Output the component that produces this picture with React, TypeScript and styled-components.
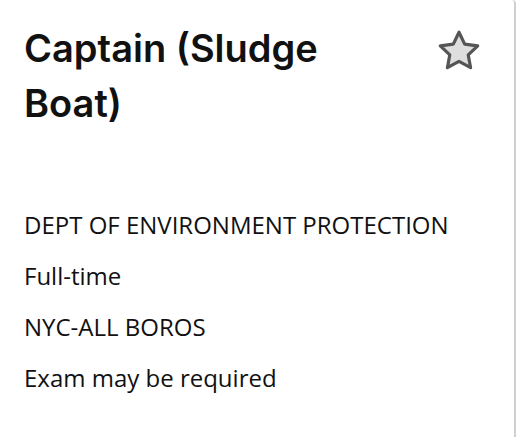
import React from "react";
import styled, { createGlobalStyle } from "styled-components";

const GlobalStyle = createGlobalStyle`
    html, body {
        margin: 0;
        padding: 0;
        background: #ffffff;
    }
`;

const Card = styled("div")`
    box-sizing: border-box;
    width: 516px;
    height: 437px;
    padding: 21px 0 0 24px;
    background: #ffffff;
    border-right: 2px solid #cfcfcf;
    border-top-right-radius: 4px;
    display: flex;
    flex-direction: column;
    color: #111111;
`;

const Header = styled("div")`
    display: flex;
    align-items: flex-start;
    justify-content: space-between;
    padding-right: 30px;
`;

const Title = styled("h2")`
    margin: 0;
    max-width: 340px;
    font-family: Inter, "Liberation Sans", sans-serif;
    font-size: 38px;
    font-weight: 600;
    line-height: 55px;
    letter-spacing: 0;
`;

const StarButton = styled("button")`
    border: none;
    background: none;
    padding: 0;
    margin-top: 6px;
    cursor: pointer;
    svg {
        display: block;
        width: 50px;
        height: 48px;
    }
`;

const Details = styled("ul")`
    list-style: none;
    margin: 76px 0 0;
    padding: 0;
    display: flex;
    flex-direction: column;
    gap: 15px;
    font-family: "Open Sans", "Noto Sans", sans-serif;
    font-size: 24px;
    line-height: 36px;
`;

const Detail = styled("li")`
    margin: 0;
`;

const details = [
    "DEPT OF ENVIRONMENT PROTECTION",
    "Full-time",
    "NYC-ALL BOROS",
    "Exam may be required",
];

export default function App() {
    return (
        <>
            <GlobalStyle />
            <Card>
                <Header>
                    <Title>Captain (Sludge Boat)</Title>
                    <StarButton aria-label="Save job">
                        <svg viewBox="0 0 24 24">
                            <path
                                d="M12 2.6l2.85 5.95 6.5.85-4.75 4.5 1.2 6.45L12 17.2l-5.8 3.15 1.2-6.45-4.75-4.5 6.5-.85z"
                                fill="#dedede"
                                stroke="#555555"
                                strokeWidth="1.6"
                                strokeLinejoin="round"
                            />
                        </svg>
                    </StarButton>
                </Header>
                <Details>
                    {details.map((d) => (
                        <Detail key={d}>{d}</Detail>
                    ))}
                </Details>
            </Card>
        </>
    );
}
